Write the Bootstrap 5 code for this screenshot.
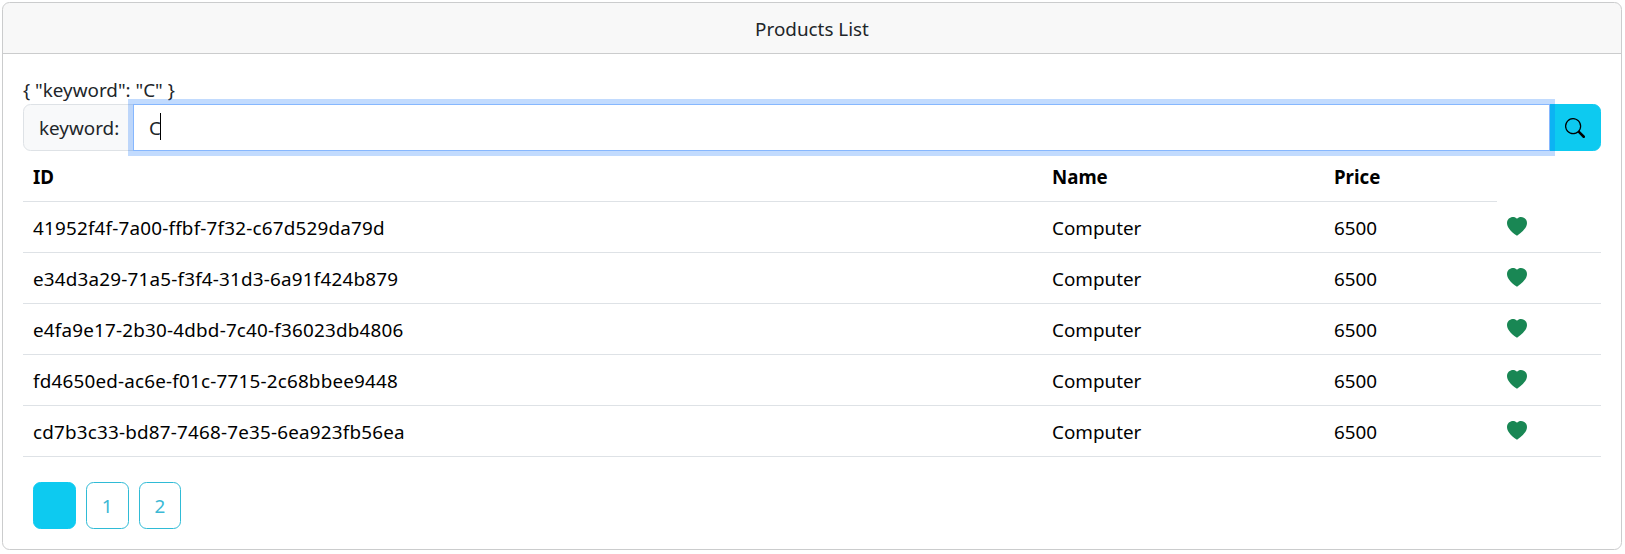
<!DOCTYPE html>
<html lang="en">
<head>
<meta charset="utf-8">
<title>Products List</title>
<link rel="stylesheet" href="https://cdn.jsdelivr.net/npm/bootstrap@5.3.0/dist/css/bootstrap.min.css">
<style>
html { font-size: 20px; }
body { font-family: "Noto Sans", "Open Sans", sans-serif; padding: 2px 2px 0; overflow: hidden; line-height: 30px; font-size: 18.85px; }
.products { width: 1620px; height: 548px; border-color: #cbcccd; }
.products .card-header { border-bottom-color: #cbcccd; padding-top: 11px; padding-bottom: 9px; }
.products .card-body { padding-top: 21px; }
.query { height: 29px; }
.products .input-group-text, .products .form-control, .products .btn { font-size: 18.85px; line-height: 30px; }
.keyword-label { width: 111px; }
.keyword-input, .keyword-input:focus { border-color: #86b7fe; box-shadow: 0 0 0 5px rgba(13, 110, 253, .25); z-index: 5; }
.products .caret { left: 138px; top: 9px; width: 1px; height: 27px; background: #000; z-index: 6; }
.products .table { table-layout: fixed; color: #000; --bs-table-color: #000; }
.products .table > :not(caption) > * > * { border-bottom-color: #dee2e6; padding-top: 11px; padding-bottom: 9px; }
.products th { font-size: 18.7px; }
.products tbody td:first-child { letter-spacing: .2px; }
.col-id { width: 1019px; }
.col-name { width: 282px; }
.col-price { width: 173px; }
.icon { width: 20px; height: 20px; display: block; }
.heart { margin: 4px 0 6px; }
.pager { gap: 10px; padding: 25px 10px 0; }
.page-btn { width: 42.8px; height: 47px; padding-left: 0; padding-right: 0; }
.btn-outline-info.page-btn { --bs-btn-color: #3cb9d5; --bs-btn-border-color: #2fbbd6; }
</style>
</head>
<body>
<svg class="d-none"><symbol id="heart" viewBox="0 0 16 16"><path fill-rule="evenodd" d="M8 1.314C12.438-3.248 23.534 4.735 8 15-7.534 4.736 3.562-3.248 8 1.314z"/></symbol></svg>
<div class="card products">
  <div class="card-header text-center">Products List</div>
  <div class="card-body">
    <div class="query">{ "keyword": "C" }</div>
    <div class="input-group flex-nowrap">
      <span class="input-group-text bg-light keyword-label">keyword:</span>
      <input type="text" class="form-control keyword-input" value="C" aria-label="keyword">
      <span class="caret position-absolute"></span>
      <button class="btn btn-info" type="button" aria-label="Search">
        <svg class="icon" viewBox="0 0 16 16" fill="currentColor"><path d="M11.742 10.344a6.500 6.500 0 1 0-1.397 1.398h-.001c.03.04.062.078.098.115l3.850 3.850a1 1 0 0 0 1.415-1.414l-3.850-3.850a1.007 1.007 0 0 0-.115-.1zM12 6.500a5.500 5.500 0 1 1-11 0 5.500 5.500 0 0 1 11 0z"/></svg>
      </button>
    </div>
    <table class="table mb-0">
      <colgroup><col class="col-id"><col class="col-name"><col class="col-price"><col></colgroup>
      <thead><tr><th>ID</th><th>Name</th><th>Price</th><td class="border-0"></td></tr></thead>
      <tbody>
        <tr><td>41952f4f-7a00-ffbf-7f32-c67d529da79d</td><td>Computer</td><td>6500</td><td><svg class="icon heart text-success" fill="currentColor"><use href="#heart"/></svg></td></tr>
        <tr><td>e34d3a29-71a5-f3f4-31d3-6a91f424b879</td><td>Computer</td><td>6500</td><td><svg class="icon heart text-success" fill="currentColor"><use href="#heart"/></svg></td></tr>
        <tr><td>e4fa9e17-2b30-4dbd-7c40-f36023db4806</td><td>Computer</td><td>6500</td><td><svg class="icon heart text-success" fill="currentColor"><use href="#heart"/></svg></td></tr>
        <tr><td>fd4650ed-ac6e-f01c-7715-2c68bbee9448</td><td>Computer</td><td>6500</td><td><svg class="icon heart text-success" fill="currentColor"><use href="#heart"/></svg></td></tr>
        <tr><td>cd7b3c33-bd87-7468-7e35-6ea923fb56ea</td><td>Computer</td><td>6500</td><td><svg class="icon heart text-success" fill="currentColor"><use href="#heart"/></svg></td></tr>
      </tbody>
    </table>
    <div class="d-flex pager">
      <button class="btn btn-info page-btn" type="button" aria-label="Current page"></button>
      <button class="btn btn-outline-info page-btn" type="button">1</button>
      <button class="btn btn-outline-info page-btn" type="button">2</button>
    </div>
  </div>
</div>
<script src="https://cdn.jsdelivr.net/npm/bootstrap@5.3.0/dist/js/bootstrap.bundle.min.js"></script>
</body>
</html>
